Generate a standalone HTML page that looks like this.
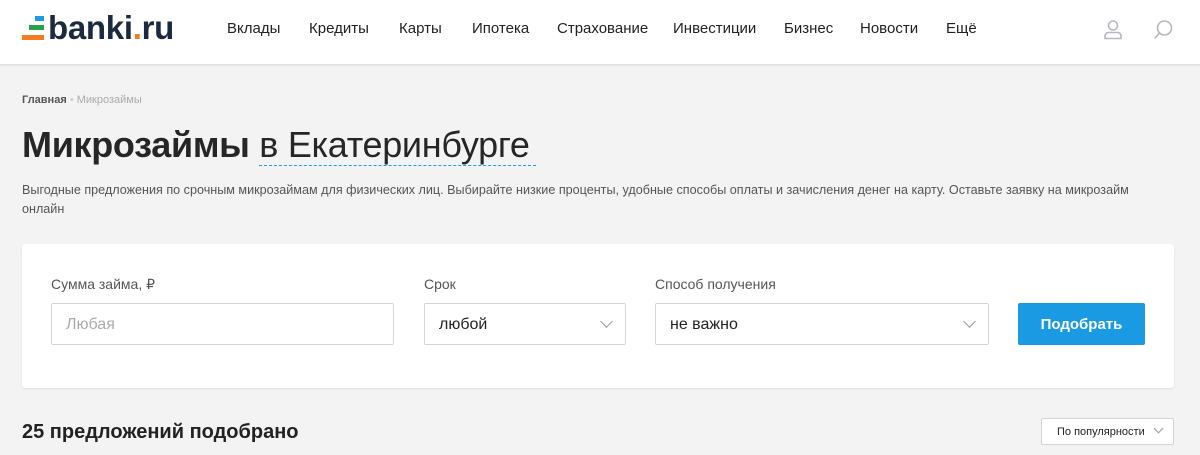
<!DOCTYPE html>
<html><head><meta charset="utf-8"><style>
*{margin:0;padding:0;box-sizing:border-box}
body{width:1200px;height:455px;overflow:hidden;background:#f3f3f3;font-family:"Liberation Sans",Arial,sans-serif;color:#222}
.hdr{position:absolute;left:0;top:0;width:1200px;height:65px;background:#fff;border-bottom:1px solid #e0e0e0;box-shadow:0 1px 1px rgba(0,0,0,.05)}
.bar{position:absolute;height:5px}
.lt{position:absolute;left:48px;top:9px;font-size:33px;line-height:38px;font-weight:bold;color:#1c2a3f;letter-spacing:-0.3px}
.nav{position:absolute;top:20px;font-size:15px;color:#222}
.bc{position:absolute;left:22px;top:94px;font-size:11px;color:#555}
h1{position:absolute;left:22px;top:124px;font-size:36px;font-weight:bold;color:#262626;letter-spacing:-0.3px}
h1 span{font-weight:normal;border-bottom:1px dashed #1f9be6;padding-right:6px}
.desc{position:absolute;left:22px;top:181px;width:1140px;font-size:12.6px;line-height:19px;color:#555}
.card{position:absolute;left:22px;top:244px;width:1152px;height:144px;background:#fff;border-radius:3px;box-shadow:0 1px 2px rgba(0,0,0,.08)}
.lbl{position:absolute;top:276px;font-size:14px;color:#555}
.inp{position:absolute;top:303px;height:42px;border:1px solid #d4d4d4;border-radius:2px;background:#fff;font-size:16px;padding:12px 14px;color:#222}
.chev{position:absolute;right:14px;top:13px;width:9px;height:9px;border-right:1.5px solid #999;border-bottom:1.5px solid #999;transform:rotate(45deg)}
.btn{position:absolute;left:1018px;top:303px;width:127px;height:42px;background:#1b9ae4;border-radius:2px;color:#fff;font-weight:bold;font-size:15px;text-align:center;line-height:44px}
.cnt{position:absolute;left:22px;top:421px;font-size:20px;font-weight:bold;color:#222}
.sort{position:absolute;left:1041px;top:418px;width:133px;height:27px;border:1px solid #d4d4d4;border-radius:2px;background:#fff;font-size:11px;padding:7px 0 0 15px;color:#222}
</style></head><body>
<div class="hdr">
<div class="bar" style="left:35px;top:16px;width:9px;background:#1f9be6"></div>
<div class="bar" style="left:29px;top:25px;width:15px;background:#2aa146"></div>
<div class="bar" style="left:22px;top:35px;width:22px;background:#f47b20"></div>
<div class="lt">banki<span style="color:#f47b20">.</span>ru</div>
<div class="nav" style="left:227px">Вклады</div>
<div class="nav" style="left:309px">Кредиты</div>
<div class="nav" style="left:399px">Карты</div>
<div class="nav" style="left:472px">Ипотека</div>
<div class="nav" style="left:557px">Страхование</div>
<div class="nav" style="left:673px">Инвестиции</div>
<div class="nav" style="left:784px">Бизнес</div>
<div class="nav" style="left:860px">Новости</div>
<div class="nav" style="left:946px">Ещё</div>
<svg style="position:absolute;left:1101px;top:18px" width="24" height="24" viewBox="0 0 24 24" fill="none" stroke="#b5b8c0" stroke-width="1.6"><circle cx="12" cy="7.5" r="4.5"/><path d="M4 20.5v-2.5c0-2 1.5-3.5 3.5-3.5h9c2 0 3.5 1.5 3.5 3.5v2.5z"/></svg>
<svg style="position:absolute;left:1151px;top:18px" width="24" height="24" viewBox="0 0 24 24" fill="none" stroke="#b5b8c0" stroke-width="1.6"><circle cx="13.5" cy="10" r="7"/><path d="M8.5 15l-5 5.5"/></svg>
</div>
<div class="bc"><b style="color:#555">Главная</b> <span style="color:#ccc">•</span> <span style="color:#aaa">Микрозаймы</span></div>
<h1>Микрозаймы <span>в Екатеринбурге</span></h1>
<div class="desc">Выгодные предложения по срочным микрозаймам для физических лиц. Выбирайте низкие проценты, удобные способы оплаты и зачисления денег на карту. Оставьте заявку на микрозайм онлайн</div>
<div class="card"></div>
<div class="lbl" style="left:51px">Сумма займа, ₽</div>
<div class="lbl" style="left:424px">Срок</div>
<div class="lbl" style="left:655px">Способ получения</div>
<div class="inp" style="left:51px;width:343px;color:#aaa">Любая</div>
<div class="inp" style="left:424px;width:202px">любой<div class="chev"></div></div>
<div class="inp" style="left:655px;width:334px">не важно<div class="chev"></div></div>
<div class="btn">Подобрать</div>
<div class="cnt">25 предложений подобрано</div>
<div class="sort">По популярности<div class="chev" style="right:11px;top:6px;width:7px;height:7px"></div></div>
</body></html>
